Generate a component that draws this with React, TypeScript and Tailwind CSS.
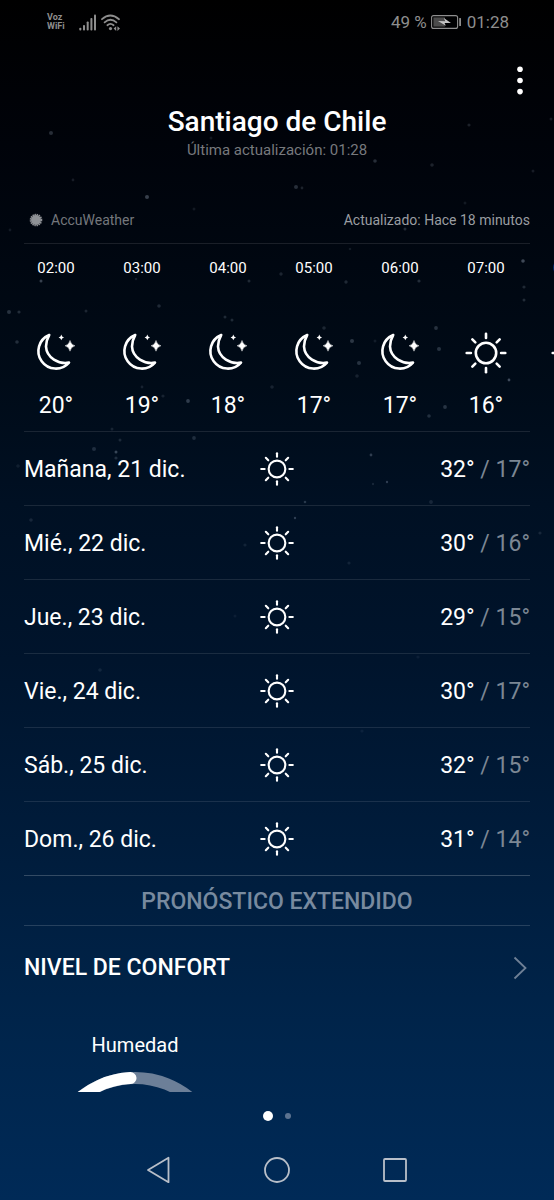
import React from 'react';

type Condition = 'sun' | 'moon';

interface Hour {
  time: string;
  condition: Condition;
  temp?: string;
}

interface Day {
  label: string;
  high: string;
  low: string;
}

const hours: Hour[] = [
  { time: '02:00', condition: 'moon', temp: '20°' },
  { time: '03:00', condition: 'moon', temp: '19°' },
  { time: '04:00', condition: 'moon', temp: '18°' },
  { time: '05:00', condition: 'moon', temp: '17°' },
  { time: '06:00', condition: 'moon', temp: '17°' },
  { time: '07:00', condition: 'sun', temp: '16°' },
  { time: '08:00', condition: 'sun' },
];

const days: Day[] = [
  { label: 'Mañana, 21 dic.', high: '32°', low: '17°' },
  { label: 'Mié., 22 dic.', high: '30°', low: '16°' },
  { label: 'Jue., 23 dic.', high: '29°', low: '15°' },
  { label: 'Vie., 24 dic.', high: '30°', low: '17°' },
  { label: 'Sáb., 25 dic.', high: '32°', low: '15°' },
  { label: 'Dom., 26 dic.', high: '31°', low: '14°' },
];

// x, y, radius, opacity
const stars: [number, number, number, number][] = [
  [51, 133, 2, 0.25], [211, 138, 1.5, 0.12], [469, 125, 1.6, 0.18], [551, 119, 1.5, 0.15],
  [147, 197, 2, 0.35], [73, 180, 1.4, 0.15], [194, 209, 1.5, 0.12], [10, 230, 1.4, 0.12],
  [375, 161, 1.8, 0.25], [432, 165, 1.8, 0.18], [533, 171, 1.5, 0.15], [296, 187, 2, 0.25],
  [302, 188, 1.4, 0.18], [465, 203, 1.5, 0.12], [405, 229, 1.5, 0.22], [350, 249, 1.3, 0.12],
  [523, 261, 1.8, 0.4], [281, 274, 1.7, 0.18], [346, 282, 1.7, 0.2], [419, 281, 1.6, 0.22],
  [524, 287, 1.6, 0.2], [524, 300, 1.5, 0.22], [41, 281, 1.5, 0.35], [136, 279, 1.3, 0.15],
  [249, 281, 1.5, 0.2], [9, 312, 2, 0.25], [19, 312, 1.6, 0.22], [86, 311, 1.5, 0.18],
  [159, 306, 1.8, 0.2], [225, 317, 1.5, 0.2], [232, 320, 1.5, 0.2], [17, 342, 1.8, 0.22],
  [324, 328, 1.8, 0.18], [352, 341, 2, 0.28], [436, 328, 1.9, 0.25], [439, 349, 2, 0.25],
  [359, 363, 2, 0.25], [357, 376, 1.8, 0.15], [509, 380, 1.4, 0.4], [375, 341, 1.5, 0.12],
  [142, 387, 1.4, 0.15], [188, 401, 1.9, 0.3], [163, 396, 1.6, 0.15], [272, 387, 1.8, 0.15],
  [445, 407, 1.9, 0.25], [429, 416, 1.8, 0.22], [112, 429, 1.5, 0.15], [120, 440, 1.5, 0.18],
  [194, 438, 1.9, 0.2], [94, 449, 2, 0.2], [116, 452, 1.5, 0.35], [116, 458, 1.6, 0.2],
  [18, 466, 1.8, 0.1], [371, 455, 1.4, 0.3], [387, 482, 1.2, 0.3], [373, 484, 1.2, 0.15],
  [305, 502, 1.3, 0.25], [295, 518, 1.2, 0.3], [431, 502, 1.9, 0.15], [31, 520, 1.8, 0.15],
  [245, 545, 1.6, 0.12], [349, 563, 1.6, 0.12], [540, 533, 1.6, 0.15], [100, 670, 1.8, 0.12],
  [418, 657, 1.6, 0.08], [235, 616, 1.5, 0.08], [362, 731, 1.6, 0.08],
];

const StarField: React.FC = () => (
  <svg
    viewBox="0 0 554 740"
    className="pointer-events-none absolute inset-x-0 top-0 w-full opacity-85"
    fill="#b9cbe0"
    aria-hidden="true"
  >
    {stars.map(([x, y, r, opacity], i) => (
      <circle key={i} cx={x} cy={y} r={r} opacity={opacity} />
    ))}
  </svg>
);

const MoonIcon: React.FC<{ className?: string }> = ({ className }) => (
  <svg viewBox="2 0 44 44" className={className} fill="none" aria-hidden="true">
    <path
      d="M17.2 4A17.45 17.45 0 1 0 37 31.6C27 33.5 14.5 27 14 15.5C14 11 15.2 7.5 17.2 4Z"
      stroke="currentColor"
      strokeWidth="2.6"
      strokeLinejoin="round"
    />
    <path d="M29.3 3.6Q29.7 6 32 6.4Q29.7 6.8 29.3 9.2Q28.9 6.8 26.6 6.4Q28.9 6 29.3 3.6Z" fill="currentColor" />
    <path
      d="M38 9.4Q39 13.8 43 14.8Q39 15.8 38 20.2Q37 15.8 33 14.8Q37 13.8 38 9.4Z"
      fill="currentColor"
      stroke="currentColor"
      strokeWidth="0.4"
    />
  </svg>
);

const SunIcon: React.FC<{ className?: string }> = ({ className }) => (
  <svg
    viewBox="0 0 44 44"
    className={className}
    fill="none"
    stroke="currentColor"
    strokeWidth="2.6"
    strokeLinecap="round"
    aria-hidden="true"
  >
    <circle cx="22" cy="22" r="10.2" />
    {[0, 45, 90, 135, 180, 225, 270, 315].map(angle => (
      <path key={angle} d="M22 2.7V6.9" transform={`rotate(${angle} 22 22)`} />
    ))}
  </svg>
);

const StatusBar: React.FC = () => (
  <div className="flex h-11 items-center justify-between pl-[47px] pr-[45px] text-[#8e8e8e]">
    <div className="flex items-center">
      <div className="w-8 text-[9px] font-bold leading-[9px]">
        Voz
        <br />
        WiFi
      </div>
      <svg viewBox="0 0 18 17" className="h-[17px] w-[18px]" fill="currentColor" aria-hidden="true">
        <rect x="0.3" y="13.8" width="2" height="2.7" rx="0.8" />
        <rect x="4" y="11" width="2" height="5.5" rx="0.8" />
        <rect x="7.7" y="7.5" width="2" height="9" rx="0.8" />
        <rect x="11.4" y="4" width="2" height="12.5" rx="0.8" />
        <rect x="15" y="0.5" width="2" height="16" rx="0.8" />
      </svg>
      <svg
        viewBox="0 0 20 17"
        className="ml-1 h-[17px] w-5"
        fill="none"
        stroke="currentColor"
        strokeWidth="1.8"
        strokeLinecap="round"
        aria-hidden="true"
      >
        <path d="M1 5.2Q9.2 -2.2 18 5.2" />
        <path d="M3.6 8.4Q9.4 3.2 15.4 8.4" />
        <path d="M6.4 11.2Q9.4 8.6 12.6 11.2" />
        <circle cx="9.5" cy="14.6" r="1.6" fill="currentColor" stroke="none" />
        <path d="M15.2 12.2V17L12.6 14.6ZM16.4 12.2L19 14.6L16.4 17Z" fill="currentColor" stroke="none" />
      </svg>
    </div>
    <div className="flex items-center text-[17px] leading-6">
      <span>49 %</span>
      <svg viewBox="0 0 31 14" className="ml-1 mr-[5px] h-3.5 w-[31px]" fill="none" aria-hidden="true">
        <rect x="0.6" y="0.6" width="26" height="12.8" rx="2" stroke="currentColor" strokeWidth="1.1" />
        <rect x="2.4" y="2.4" width="11.5" height="9.2" fill="#4b4b4b" />
        <path d="M7 6L14.2 6.2L12.8 3L20 8L13.4 7.9L15 10.8Z" fill="#c4c4c4" />
        <rect x="28.2" y="3" width="1.8" height="8" rx="0.5" fill="currentColor" />
      </svg>
      <span>01:28</span>
    </div>
  </div>
);

const HourlyForecast: React.FC = () => (
  <ul className="flex overflow-hidden pl-[13px]">
    {hours.map(({ time, condition, temp }) => (
      <li key={time} className="flex w-[86px] shrink-0 flex-col items-center pb-[9px]">
        <span className="mt-3 text-[15px] leading-6">{time}</span>
        {condition === 'moon' ? (
          <MoonIcon className="mt-[51px] size-11" />
        ) : (
          <SunIcon className="mt-[51px] size-11" />
        )}
        <span className="mt-[15px] text-[23px] leading-8">{temp}</span>
      </li>
    ))}
  </ul>
);

const HumidityGauge: React.FC = () => (
  <div className="flex w-[222px] flex-col items-center">
    <h3 className="text-xl leading-6">Humedad</h3>
    <svg viewBox="0 0 120 20" className="mt-[15px] h-5 w-[120px]" fill="none" strokeWidth="12" aria-hidden="true">
      <circle cx="60" cy="92" r="86" stroke="#6c7f98" />
      <path d="M-26 92A86 86 0 0 1 55.5 6.1" stroke="#fff" strokeLinecap="round" />
    </svg>
  </div>
);

const NavigationBar: React.FC = () => (
  <nav className="flex h-[60px] items-center justify-center gap-[86px] text-[#b8bfc9]">
    <button aria-label="Atrás">
      <svg viewBox="0 0 32 32" className="size-8" fill="none" stroke="currentColor" strokeWidth="1.8" strokeLinejoin="round">
        <path d="M25.5 3.8V28.2L5 16Z" />
      </svg>
    </button>
    <button aria-label="Inicio">
      <svg viewBox="0 0 32 32" className="size-8" fill="none" stroke="currentColor" strokeWidth="1.8">
        <circle cx="16" cy="16" r="12" />
      </svg>
    </button>
    <button aria-label="Recientes">
      <svg viewBox="0 0 32 32" className="size-8" fill="none" stroke="currentColor" strokeWidth="1.8">
        <rect x="5" y="5" width="22" height="22" rx="1" />
      </svg>
    </button>
  </nav>
);

const App: React.FC = () => {
  return (
    <div className="relative flex min-h-screen flex-col bg-[linear-gradient(to_bottom,#000000_0%,#00030a_12%,#000b18_32%,#001023_42%,#00142c_55%,#001d3d_72%,#00254c_87%,#002a57_100%)] font-[Roboto,sans-serif] text-white">
      <StarField />
      <StatusBar />

      <header className="flex flex-col">
        <button aria-label="Más opciones" className="mr-[18px] mt-5 self-end">
          <svg viewBox="0 0 32 32" className="size-8" fill="currentColor">
            <circle cx="16" cy="5.2" r="2.8" />
            <circle cx="16" cy="16.5" r="2.8" />
            <circle cx="16" cy="27.6" r="2.8" />
          </svg>
        </button>
        <h1 className="mt-2 text-center text-[28px] font-medium leading-9">Santiago de Chile</h1>
        <p className="text-center text-[15px] leading-5 text-[#77797d]">Última actualización: 01:28</p>
      </header>

      <main className="flex flex-col">
        <div className="mx-6 mt-12 flex items-center justify-between border-b border-white/10 pb-[11px] text-sm leading-6">
          <a href="#accuweather" className="flex items-center gap-[7px] pl-1 text-[#74777c]">
            <svg viewBox="0 0 16 16" className="size-4" fill="#8f9296" aria-hidden="true">
              <circle cx="8" cy="8" r="5" />
              <circle cx="8" cy="8" r="5.4" fill="none" stroke="#8f9296" strokeWidth="1.8" strokeDasharray="1.4 0.72" />
            </svg>
            AccuWeather
          </a>
          <span className="text-[#9a9da1]">Actualizado: Hace 18 minutos</span>
        </div>

        <HourlyForecast />

        <ul className="mx-6 border-t border-white/10">
          {days.map(({ label, high, low }) => (
            <li
              key={label}
              className="grid h-[74px] grid-cols-[1fr_auto_1fr] items-center border-b border-white/10 text-[23px] last:border-white/20"
            >
              <span className="pt-1">{label}</span>
              <SunIcon className="size-9" />
              <span className="pt-1 text-right">
                {high}
                <span className="text-[#7c8794]"> / {low}</span>
              </span>
            </li>
          ))}
        </ul>

        <button className="mx-6 h-[50px] border-b border-white/15 pt-1 text-[23px] font-medium text-[#788a9f]">
          PRONÓSTICO EXTENDIDO
        </button>

        <section className="px-6 pt-6">
          <a href="#confort" className="flex items-center justify-between">
            <h2 className="text-[23px] font-medium leading-9">NIVEL DE CONFORT</h2>
            <svg viewBox="0 0 20 24" className="h-6 w-5" fill="none" stroke="#6f8096" strokeWidth="1.8" aria-hidden="true">
              <path d="M4.5 1.5L15.5 12L4.5 22.5" />
            </svg>
          </a>
          <div className="mt-[47px]">
            <HumidityGauge />
          </div>
        </section>
      </main>

      <footer className="mt-auto">
        <div className="flex h-12 items-center justify-center gap-3">
          <span className="size-2.5 rounded-full bg-white" />
          <span className="size-1.5 rounded-full bg-[#5c7390]" />
        </div>
        <NavigationBar />
      </footer>
    </div>
  );
};

export default App;
